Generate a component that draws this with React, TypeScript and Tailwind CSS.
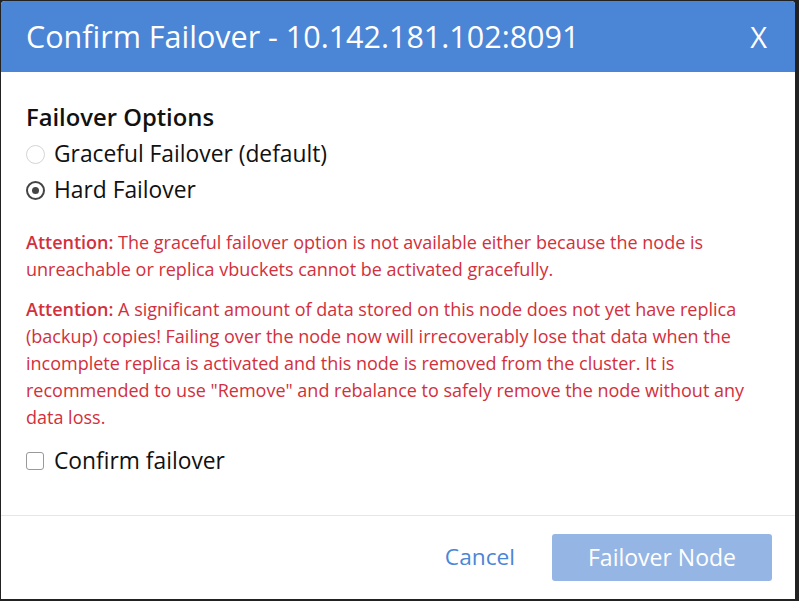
import { useState } from 'react';

export default function App() {
  const [mode, setMode] = useState<'graceful' | 'hard'>('hard');
  const [confirmed, setConfirmed] = useState(false);

  return (
    <div className="h-[601px] w-[799px] bg-[#222] pl-px pr-1 pt-px pb-[2px] font-['Open_Sans',sans-serif]">
      <div className="flex h-full flex-col overflow-hidden rounded-t-[4px] bg-white">
        <header className="flex h-[71px] flex-none items-center justify-between bg-[#4b85d6] pl-[25px] pr-[28px] text-white">
          <h1 className="text-[30.5px] leading-none">Confirm Failover - 10.142.181.102:8091</h1>
          <button className="text-[29px] leading-none">X</button>
        </header>

        <div className="flex-1 px-[25px] pt-[30px]">
          <h2 className="text-[23.8px] font-semibold leading-[30px] text-[#111]">Failover Options</h2>
          <div className="mt-[7px] flex flex-col gap-[6px] text-[22.8px] leading-[30px] text-[#111]">
            <label className="flex items-center gap-[9px]" onClick={() => setMode('graceful')}>
              <span className="flex h-[19px] w-[19px] items-center justify-center rounded-full border-[1.5px] border-[#d4d4d4]">
                {mode === 'graceful' && <span className="h-[7px] w-[7px] rounded-full bg-[#444]" />}
              </span>
              Graceful Failover (default)
            </label>
            <label className="flex items-center gap-[9px]" onClick={() => setMode('hard')}>
              <span className="flex h-[19px] w-[19px] items-center justify-center rounded-full border-[2.5px] border-[#444]">
                {mode === 'hard' && <span className="h-[7px] w-[7px] rounded-full bg-[#444]" />}
              </span>
              Hard Failover
            </label>
          </div>

          <div className="mt-[24px] text-[18px] leading-[27px] text-[#d2303c]">
            <p>
              <b className="font-semibold">Attention:</b> The graceful failover option is not available either because the node is
              unreachable or replica vbuckets cannot be activated gracefully.
            </p>
            <p className="mt-[13px]">
              <b className="font-semibold">Attention:</b> A significant amount of data stored on this node does not yet have replica
              (backup) copies! Failing over the node now will irrecoverably lose that data when the incomplete replica is activated
              and this node is removed from the cluster. It is recommended to use "Remove" and rebalance to safely remove the node
              without any data loss.
            </p>
          </div>

          <label className="mt-[15px] flex items-center gap-[10px] text-[22.8px] leading-[30px] text-[#111]" onClick={() => setConfirmed(!confirmed)}>
            <span className="h-[18px] w-[18px] rounded-[3px] border-[1.5px] border-[#999]">
              {confirmed && <span className="block h-full w-full bg-[#444]" />}
            </span>
            Confirm failover
          </label>
        </div>

        <footer className="flex h-[84px] flex-none items-center justify-end gap-[37px] border-t border-[#e6e6e6] pr-[23px]">
          <button className="text-[22.7px] text-[#4b85d6]">Cancel</button>
          <button className="h-[47px] w-[220px] rounded-[3px] bg-[#95b5e4] text-[23px] text-white">Failover Node</button>
        </footer>
      </div>
    </div>
  );
}
